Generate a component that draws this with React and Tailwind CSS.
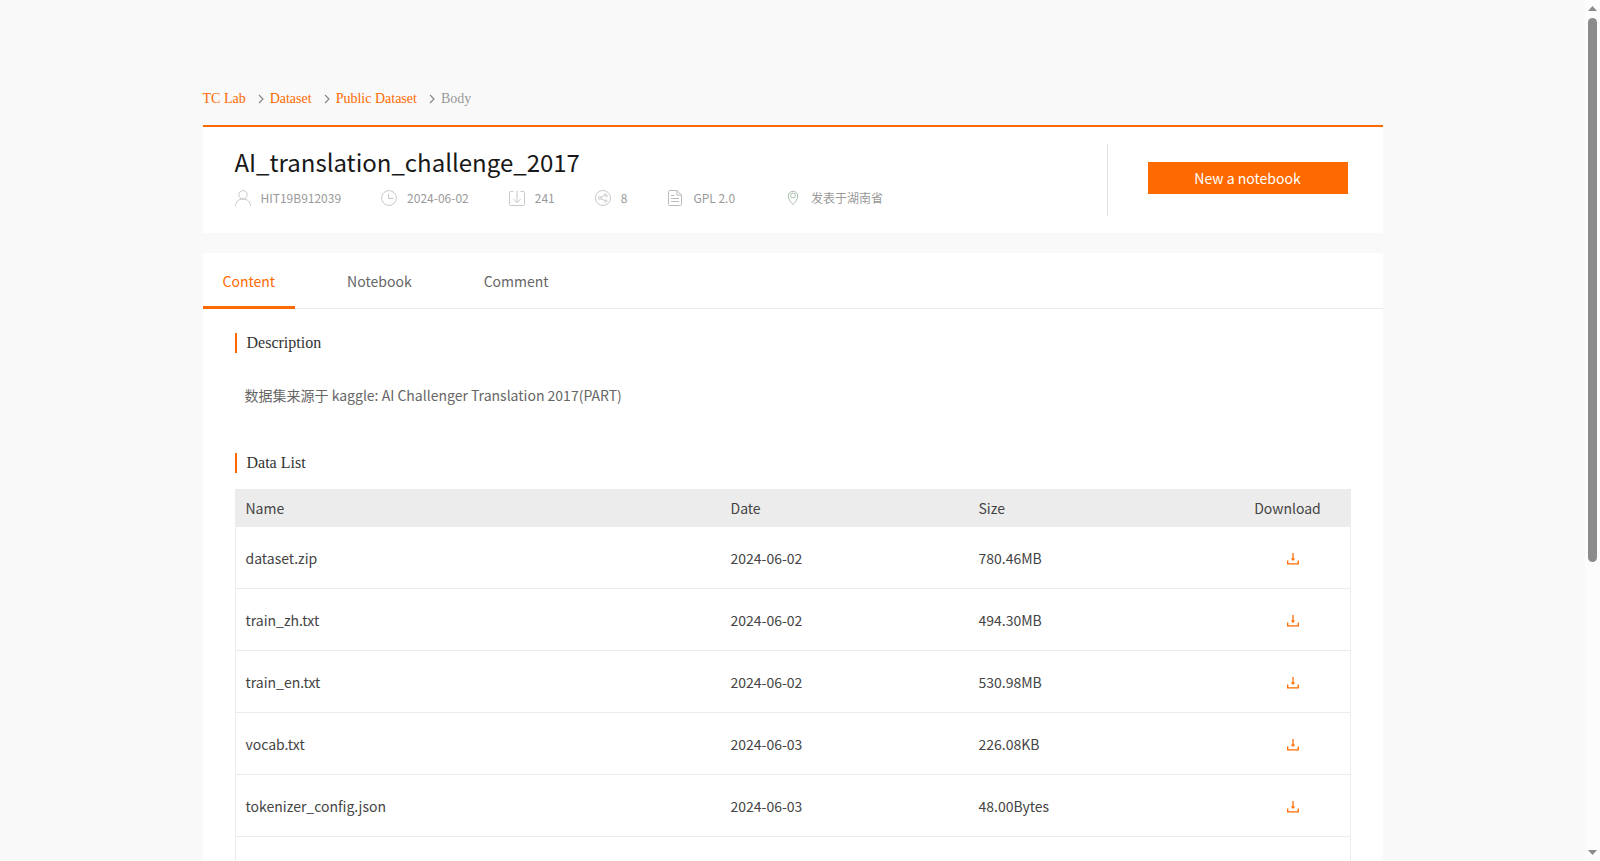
import React from 'react';

const files = [
  { name: 'dataset.zip', date: '2024-06-02', size: '780.46MB' },
  { name: 'train_zh.txt', date: '2024-06-02', size: '494.30MB' },
  { name: 'train_en.txt', date: '2024-06-02', size: '530.98MB' },
  { name: 'vocab.txt', date: '2024-06-03', size: '226.08KB' },
  { name: 'tokenizer_config.json', date: '2024-06-03', size: '48.00Bytes' },
];

const crumbs = ['TC Lab', 'Dataset', 'Public Dataset'];
const tabs = ['Content', 'Notebook', 'Comment'];

const Icon = ({ children, className = 'text-[#c8c8c8]' }) => (
  <svg width="16" height="16" viewBox="0 0 16 16" fill="none" stroke="currentColor" strokeWidth="1" className={`shrink-0 ${className}`} aria-hidden="true">
    {children}
  </svg>
);

const UserIcon = () => (
  <Icon>
    <circle cx="8" cy="4.8" r="4.2" />
    <path d="M.5 16c0-4 3-7 7.500-7s7.500 3 7.500 7" />
  </Icon>
);

const ClockIcon = () => (
  <Icon>
    <circle cx="8" cy="8" r="7.400" />
    <path d="M7.500 3.500v5h5" />
  </Icon>
);

const InboxIcon = () => (
  <Icon>
    <path d="M4.500 1.500h-3a1 1 0 0 0-1 1v12a1 1 0 0 0 1 1h13a1 1 0 0 0 1-1v-12a1 1 0 0 0-1-1h-3" />
    <path d="M8 .5v12M4.300 9 8 12.700 11.700 9" />
  </Icon>
);

const ShareIcon = () => (
  <Icon>
    <circle cx="8" cy="8" r="7.500" />
    <circle cx="4.800" cy="8" r="1.400" />
    <circle cx="10.500" cy="4.800" r="1.100" />
    <circle cx="10.800" cy="11" r="1.100" />
    <path d="M6 7.300 9.500 5.300M6 8.700l3.800 1.800M11.500 7.500l1-2" />
  </Icon>
);

const DocIcon = () => (
  <Icon className="text-[#bbb]">
    <path d="M10 .5H2.500a1 1 0 0 0-1 1v13a1 1 0 0 0 1 1h11a1 1 0 0 0 1-1V5L10 .5V5h4.500" />
    <path d="M4 5.500h3.500M4 8.500h8M4 11.500h8" />
  </Icon>
);

const PinIcon = () => (
  <Icon className="text-[#a9bfad]">
    <path d="M8 14.500C5 11.500 3.300 8.500 3.300 6a4.700 4.700 0 0 1 9.400 0c0 2.500-1.700 5.500-4.700 8.500Z" />
    <circle cx="8" cy="5.500" r="2.400" />
  </Icon>
);

const DownloadIcon = () => (
  <svg width="12" height="12" viewBox="0 0 12 12" fill="none" stroke="#ff6a00" aria-hidden="true">
    <path d="M.7 7.500v3.400h10.600V7.500" strokeWidth="1.300" />
    <path d="M6 0v7" strokeWidth="1.300" />
    <path d="M3.800 5.500h4.400L6 8Z" fill="#ff6a00" stroke="none" />
  </svg>
);

const meta = [
  { icon: <UserIcon />, text: 'HIT19B912039' },
  { icon: <ClockIcon />, text: '2024-06-02' },
  { icon: <InboxIcon />, text: '241' },
  { icon: <ShareIcon />, text: '8' },
  { icon: <DocIcon />, text: 'GPL 2.0' },
  { icon: <PinIcon />, text: '发表于湖南省', className: 'ml-2.5' },
];

const Breadcrumb = () => (
  <nav aria-label="Breadcrumb" className="pt-[89px] flex items-center font-['Liberation_Serif',serif] text-sm leading-5">
    {crumbs.map((label) => (
      <React.Fragment key={label}>
        <a href="#" className="text-[#ff6a00]">{label}</a>
        <svg width="6" height="10" viewBox="0 0 6 10" fill="none" stroke="#888" strokeWidth="1.200" className="ml-3 mr-1.5" aria-hidden="true">
          <path d="M1 1l4 4-4 4" />
        </svg>
      </React.Fragment>
    ))}
    <span className="text-[#999]">Body</span>
  </nav>
);

const SectionTitle = ({ children }) => (
  <h2 className="border-l-2 border-[#ff6a00] pl-2.5 font-['Liberation_Serif',serif] text-base leading-5 text-[#333]">{children}</h2>
);

// Window scrollbar
const ScrollRail = () => (
  <div className="w-[15px] shrink-0 bg-[#fcfcfc] flex flex-col items-center py-1.5" aria-hidden="true">
    <svg width="9" height="5" viewBox="0 0 9 5" fill="#8b8b8b"><path d="M4.500 0 9 5H0Z" /></svg>
    <div className="mt-[7px] h-[544px] w-[9px] rounded-full bg-[#8b8b8b]" />
    <svg width="9" height="5" viewBox="0 0 9 5" fill="#8b8b8b" className="mt-auto"><path d="M4.500 5 9 0H0Z" /></svg>
  </div>
);

const App = () => {
  return (
    <div className="flex h-screen overflow-hidden bg-[#f9f9f9] font-['Noto_Sans_CJK_SC',sans-serif] text-sm text-[#444]">
      <main className="flex-1 min-w-0 overflow-hidden">
        <div className="max-w-[1180px] mx-auto">
          <Breadcrumb />

          {/* Dataset header */}
          <header className="mt-4 bg-white border-t-2 border-[#ff6a00] pl-8 pr-[35px] py-[17px] flex justify-between">
            <div>
              <h1 className="text-2xl leading-9 text-[#181818]">AI_translation_challenge_2017</h1>
              <ul className="mt-2.5 flex gap-10 text-xs leading-4 text-[#999]">
                {meta.map((item) => (
                  <li key={item.text} className={`flex items-center gap-2.5 ${item.className || ''}`}>
                    {item.icon}
                    <span>{item.text}</span>
                  </li>
                ))}
              </ul>
            </div>
            <div className="h-[72px] border-l border-[#e0e0e0] pl-10 pt-[18px]">
              <button type="button" className="block w-[200px] h-8 bg-[#ff6a00] text-white text-sm leading-8">New a notebook</button>
            </div>
          </header>

          <section className="mt-5 bg-white">
            <nav className="h-14 flex gap-8 border-b border-[#ebebeb]">
              {tabs.map((tab, i) => (
                <button
                  key={tab}
                  type="button"
                  className={`h-14 px-5 pt-0.5 border-b-3 leading-5 ${
                    i === 0 ? 'border-[#ff6a00] text-[#ff6a00]' : 'border-transparent text-[#666]'
                  }`}
                >
                  {tab}
                </button>
              ))}
            </nav>

            <div className="px-8 pt-6 pb-8">
              <SectionTitle>Description</SectionTitle>
              <p className="mt-8 mb-12 pl-2.5 leading-5 text-[#666]">数据集来源于 kaggle: AI Challenger Translation 2017(PART)</p>

              <SectionTitle>Data List</SectionTitle>
              <table className="mt-4 w-full table-fixed border-separate border-spacing-0 border border-b-0 border-[#ebebeb] text-left">
                <thead className="bg-[#ececec]">
                  <tr className="h-[37px]">
                    <th className="px-2.5 pb-0.5 font-normal">Name</th>
                    <th className="w-[248px] px-2.5 pb-0.5 font-normal">Date</th>
                    <th className="w-[267px] px-2.5 pb-0.5 font-normal">Size</th>
                    <th className="w-[114px] pr-2.5 pb-0.5 font-normal text-center">Download</th>
                  </tr>
                </thead>
                <tbody>
                  {files.map((file) => (
                    <tr key={file.name} className="h-[62px]">
                      <td className="px-2.5 border-b border-[#ebebeb]">{file.name}</td>
                      <td className="px-2.5 border-b border-[#ebebeb]">{file.date}</td>
                      <td className="px-2.5 border-b border-[#ebebeb]">{file.size}</td>
                      <td className="pt-0.5 border-b border-[#ebebeb]">
                        <a href="#" aria-label={`Download ${file.name}`} className="flex justify-center">
                          <DownloadIcon />
                        </a>
                      </td>
                    </tr>
                  ))}
                  <tr className="h-[62px]">
                    <td colSpan={4} className="border-b border-[#ebebeb]" />
                  </tr>
                </tbody>
              </table>
            </div>
          </section>
        </div>
      </main>
      <ScrollRail />
    </div>
  );
};

export default App;
